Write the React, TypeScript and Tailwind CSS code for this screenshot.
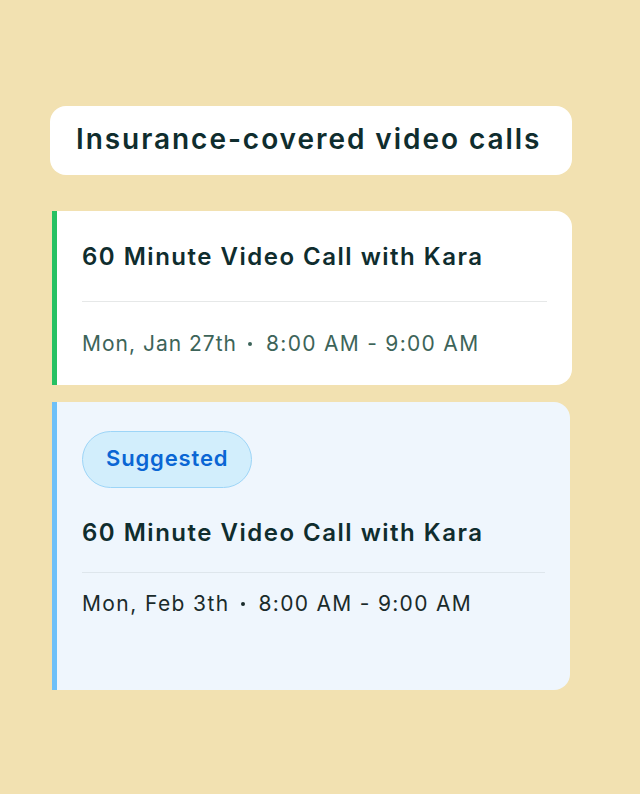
export default function App() {
  return (
    <div
      className="w-[640px] h-[794px] bg-[#F2E1B1] pt-[106px]"
      style={{ fontFamily: "Inter, 'Noto Sans', sans-serif" }}
    >
      <div className="ml-[50px] w-[522px] h-[69px] bg-white rounded-[16px] flex items-center pl-[26px]">
        <span className="text-[28px] font-semibold text-[#0F2D2E] tracking-[1.95px] -mt-[3px]">
          Insurance-covered video calls
        </span>
      </div>

      <div className="ml-[52px] mt-[36px] w-[520px] h-[174px] bg-white rounded-r-[16px] border-l-[5px] border-[#27C163] pl-[25px] pr-[25px] pt-[30px]">
        <div className="text-[24px] leading-[32px] font-semibold text-[#0F2D2E] tracking-[1.5px]">
          60 Minute Video Call with Kara
        </div>
        <div className="mt-[28px] h-px bg-[#E6E8E8]" />
        <div className="mt-[26px] text-[21px] leading-[32px] text-[#3D6459] flex items-center">
          <span className="tracking-[1px]">Mon, Jan 27th</span>
          <span className="ml-[11px] mr-[14px] w-[4px] h-[4px] rounded-full bg-[#3D6459]" />
          <span className="tracking-[1.3px]">8:00 AM - 9:00 AM</span>
        </div>
      </div>

      <div className="ml-[52px] mt-[17px] w-[518px] h-[288px] bg-[#EFF6FD] rounded-r-[16px] border-l-[5px] border-[#6EC0F8] pl-[25px] pr-[25px] pt-[29px]">
        <div className="inline-flex items-center justify-center h-[57px] px-[23px] rounded-full bg-[#D2EEFC] border border-[#9DD5F7]">
          <span className="text-[22px] font-semibold text-[#0A66D4] tracking-[0.85px] -mt-[2px]">Suggested</span>
        </div>
        <div className="mt-[29px] text-[24px] leading-[32px] font-semibold text-[#0F2D2E] tracking-[1.5px]">
          60 Minute Video Call with Kara
        </div>
        <div className="mt-[23px] h-px bg-[#DEE6EC]" />
        <div className="mt-[15px] text-[21px] leading-[32px] text-[#1A2B2B] flex items-center">
          <span className="tracking-[1.4px]">Mon, Feb 3th</span>
          <span className="ml-[11px] mr-[14px] w-[4px] h-[4px] rounded-full bg-[#1A2B2B]" />
          <span className="tracking-[1.3px]">8:00 AM - 9:00 AM</span>
        </div>
      </div>
    </div>
  );
}
